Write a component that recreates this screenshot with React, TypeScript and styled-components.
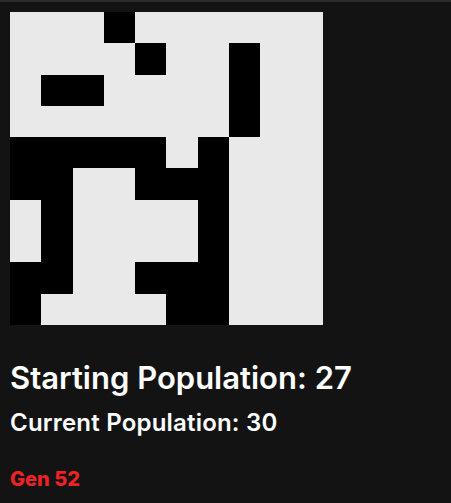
import React from "react";
import styled, { createGlobalStyle } from "styled-components";

const Global = createGlobalStyle`
  html, body { margin: 0; padding: 0; background: #131313; }
  body { font-family: Inter, "Noto Sans", sans-serif; }
`;

const Page = styled.div`
  min-height: 503px;
  box-sizing: border-box;
  border-top: 2px solid #2a2a2a;
  padding: 10px 10px;
  display: flex;
  flex-direction: column;
`;

const Board = styled.div`
  width: 313px;
  height: 313px;
  display: grid;
  grid-template-columns: repeat(10, 1fr);
  grid-template-rows: repeat(10, 1fr);
`;

const Cell = styled.div<{ $alive: boolean }>`
  background: ${(p) => (p.$alive ? "#000000" : "#e9e9e9")};
`;

const Title = styled.h1`
  margin: 35px 0 0;
  font-size: 31px;
  line-height: 36px;
  font-weight: 600;
  color: #ffffff;
`;

const Sub = styled.h2`
  margin: 13px 0 0;
  font-size: 24px;
  line-height: 28px;
  font-weight: 600;
  letter-spacing: 0.2px;
  color: #ffffff;
`;

const Gen = styled.div`
  margin: 30px 0 0;
  font-size: 20px;
  line-height: 24px;
  font-weight: 800;
  color: #ee2222;
`;

const rows = [
  "0001000000",
  "0000100100",
  "0110000100",
  "0000000100",
  "1111101000",
  "1100111000",
  "0100001000",
  "0100001000",
  "1100111000",
  "1000011000",
];

export default function App() {
  return (
    <>
      <Global />
      <Page>
        <Board>
          {rows.flatMap((r, i) =>
            r.split("").map((c, j) => <Cell key={`${i}-${j}`} $alive={c === "1"} />)
          )}
        </Board>
        <Title>Starting Population: 27</Title>
        <Sub>Current Population: 30</Sub>
        <Gen>Gen 52</Gen>
      </Page>
    </>
  );
}
